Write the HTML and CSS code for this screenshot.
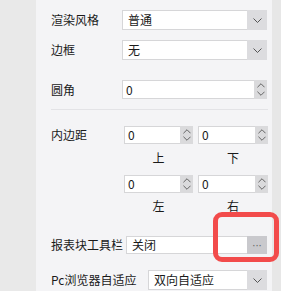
FILE: index.html
```html
<!DOCTYPE html>
<html>
<head>
<meta charset="utf-8">
<link rel="stylesheet" href="styles.css">
</head>
<body>
<div class="app">
  <div class="side"></div>
  <div class="panel">
    <div class="row r1">
      <div class="label w71">渲染风格</div>
      <div class="select h20"><span class="val">普通</span><span class="dd"><svg width="9" height="5" viewBox="0 0 9 5"><path d="M0.5 0.5 L4.5 4.5 L8.5 0.5" fill="none" stroke="#555" stroke-width="1"/></svg></span></div>
    </div>
    <div class="row r2">
      <div class="label w71">边框</div>
      <div class="select h20"><span class="val">无</span><span class="dd"><svg width="9" height="5" viewBox="0 0 9 5"><path d="M0.5 0.5 L4.5 4.5 L8.5 0.5" fill="none" stroke="#555" stroke-width="1"/></svg></span></div>
    </div>
    <div class="row r3">
      <div class="label w71">圆角</div>
      <div class="num h19"><span class="val">0</span><span class="spin"><svg width="9" height="5" viewBox="0 0 9 5"><path d="M0.5 4.5 L4.5 0.5 L8.5 4.5" fill="none" stroke="#555"/></svg><svg width="9" height="5" viewBox="0 0 9 5"><path d="M0.5 0.5 L4.5 4.5 L8.5 0.5" fill="none" stroke="#555"/></svg></span></div>
    </div>
    <div class="sep"></div>
    <div class="row pad">
      <div class="label w73 top">内边距</div>
      <div class="grid">
        <div class="num h18"><span class="val">0</span><span class="spin"><svg width="9" height="5" viewBox="0 0 9 5"><path d="M0.5 4.5 L4.5 0.5 L8.5 4.5" fill="none" stroke="#555"/></svg><svg width="9" height="5" viewBox="0 0 9 5"><path d="M0.5 0.5 L4.5 4.5 L8.5 0.5" fill="none" stroke="#555"/></svg></span></div>
        <div class="num h18"><span class="val">0</span><span class="spin"><svg width="9" height="5" viewBox="0 0 9 5"><path d="M0.5 4.5 L4.5 0.5 L8.5 4.5" fill="none" stroke="#555"/></svg><svg width="9" height="5" viewBox="0 0 9 5"><path d="M0.5 0.5 L4.5 4.5 L8.5 0.5" fill="none" stroke="#555"/></svg></span></div>
        <div class="cap c1">上</div>
        <div class="cap c1">下</div>
        <div class="num h18"><span class="val">0</span><span class="spin"><svg width="9" height="5" viewBox="0 0 9 5"><path d="M0.5 4.5 L4.5 0.5 L8.5 4.5" fill="none" stroke="#555"/></svg><svg width="9" height="5" viewBox="0 0 9 5"><path d="M0.5 0.5 L4.5 4.5 L8.5 0.5" fill="none" stroke="#555"/></svg></span></div>
        <div class="num h18"><span class="val">0</span><span class="spin"><svg width="9" height="5" viewBox="0 0 9 5"><path d="M0.5 4.5 L4.5 0.5 L8.5 4.5" fill="none" stroke="#555"/></svg><svg width="9" height="5" viewBox="0 0 9 5"><path d="M0.5 0.5 L4.5 4.5 L8.5 0.5" fill="none" stroke="#555"/></svg></span></div>
        <div class="cap c2">左</div>
        <div class="cap c2">右</div>
      </div>
    </div>
    <div class="row tb">
      <div class="label w75">报表块工具栏</div>
      <div class="select h18"><span class="val">关闭</span><span class="more">···</span></div>
    </div>
    <div class="row pc">
      <div class="label w97">Pc浏览器自适应</div>
      <div class="select h20"><span class="val">双向自适应</span><span class="dd"><svg width="9" height="5" viewBox="0 0 9 5"><path d="M0.5 0.5 L4.5 4.5 L8.5 0.5" fill="none" stroke="#555" stroke-width="1"/></svg></span></div>
    </div>
  </div>
  <div class="scroll"></div>
  <div class="mark"></div>
</div>
</body>
</html>
```
FILE: styles.css
```css
* { box-sizing: border-box; }
html, body { margin: 0; padding: 0; }
body {
  font-family: "Noto Sans CJK SC", "Noto Sans", sans-serif;
  font-size: 12px;
  color: #1a1a1a;
}
.app {
  position: relative;
  display: flex;
  width: 281px;
  height: 291px;
  overflow: hidden;
}
.side { width: 36px; background: #e9e9e9; }
.panel {
  width: 236px;
  background: #f4f4f6;
  padding: 10px 5px 0 15px;
}
.scroll { width: 9px; background: #e7e7e7; }
.row { display: flex; align-items: center; }
.label { flex: none; line-height: 16px; white-space: nowrap; }
.label.top { align-self: flex-start; margin-top: 1px; }
.w71 { width: 71px; }
.w73 { width: 73px; }
.w75 { width: 75px; }
.w97 { width: 97px; }
.r2 { margin-top: 10px; }
.r3 { margin-top: 20px; }
.sep { margin-top: 10px; height: 1px; background: #e3e3e6; margin-right: -1px; }
.pad { margin-top: 16px; align-items: flex-start; }
.tb { margin-top: 23px; }
.pc { margin-top: 16px; }
.select, .num {
  flex: 1;
  display: flex;
  background: #fff;
  border: 1px solid #d6d6d8;
  min-width: 0;
}
.h20 { height: 20px; }
.h19 { height: 19px; }
.h18 { height: 18px; }
.val { flex: 1; padding-left: 5px; display: flex; align-items: center; line-height: 16px; }
.num .val { padding-left: 3px; }
.dd {
  width: 20px;
  margin: -1px -1px -1px 0;
  background: #dcdcdf;
  display: flex; align-items: center; justify-content: center;
}
.more {
  width: 20px;
  margin: -1px -1px -1px 0;
  background: #c9c9cd;
  display: flex; align-items: center; justify-content: center;
  color: #666; font-size: 10px; letter-spacing: 0;
  font-family: "DejaVu Sans", sans-serif;
}
.spin {
  width: 13px;
  margin: -1px -1px -1px 0;
  background: #dadadc;
  display: flex; flex-direction: column; align-items: center; justify-content: space-evenly;
}
.spin svg { display: block; width: 8px; height: 5px; }
.grid {
  display: grid;
  grid-template-columns: 69px 70px;
  grid-template-rows: 18px 31px 18px 20px;
  column-gap: 5px;
}
.cap { text-align: center; line-height: 16px; }
.c1 { padding-top: 6px; }
.c2 { padding-top: 5px; }
.mark {
  position: absolute;
  left: 213px; top: 212px;
  width: 66px; height: 50px;
  border: 5px solid #f24b4b;
  border-radius: 9px;
}
```
